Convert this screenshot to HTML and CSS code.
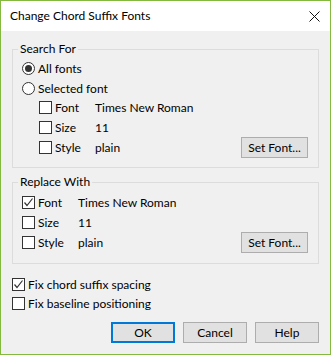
FILE: index.html
```html
<!DOCTYPE html>
<html lang="en">
<head>
    <meta charset="UTF-8">
    <title>Change Chord Suffix Fonts</title>
    <link rel="stylesheet" href="styles.css">
</head>
<body>
    <div class="window">
        <div class="titlebar">
            <span class="title">Change Chord Suffix Fonts</span>
            <svg class="close" width="11" height="11" viewBox="0 0 11 11">
                <path d="M0.5 0.5 L10.5 10.5 M10.5 0.5 L0.5 10.5" stroke="#111" stroke-width="1" fill="none"/>
            </svg>
        </div>

        <div class="content">
            <fieldset class="group">
                <legend>Search For</legend>
                <div class="group-body">
                    <div class="row"><span class="radio checked"></span><span>All fonts</span></div>
                    <div class="row"><span class="radio"></span><span>Selected font</span></div>
                    <div class="row indent"><span class="check"></span><span class="label">Font</span><span>Times New Roman</span></div>
                    <div class="row indent"><span class="check"></span><span class="label">Size</span><span>11</span></div>
                    <div class="row indent last">
                        <span class="check"></span><span class="label">Style</span><span>plain</span>
                        <button class="btn set-font">Set Font...</button>
                    </div>
                </div>
            </fieldset>

            <fieldset class="group replace">
                <legend>Replace With</legend>
                <div class="group-body">
                    <div class="row">
                        <span class="check"><svg width="11" height="11" viewBox="0 0 11 11"><path d="M1.5 5.5 L4 8.5 L9.5 1.5" stroke="#333" stroke-width="1.2" fill="none"/></svg></span>
                        <span class="label">Font</span><span>Times New Roman</span>
                    </div>
                    <div class="row"><span class="check"></span><span class="label">Size</span><span>11</span></div>
                    <div class="row last">
                        <span class="check"></span><span class="label">Style</span><span>plain</span>
                        <button class="btn set-font">Set Font...</button>
                    </div>
                </div>
            </fieldset>

            <div class="options">
                <div class="row">
                    <span class="check"><svg width="11" height="11" viewBox="0 0 11 11"><path d="M1.5 5.5 L4 8.5 L9.5 1.5" stroke="#333" stroke-width="1.2" fill="none"/></svg></span>
                    <span>Fix chord suffix spacing</span>
                </div>
                <div class="row"><span class="check"></span><span>Fix baseline positioning</span></div>
            </div>

            <div class="actions">
                <button class="btn default">OK</button>
                <button class="btn">Cancel</button>
                <button class="btn">Help</button>
            </div>
        </div>
    </div>
</body>
</html>
```
FILE: styles.css
```css
body {
    margin: 0;
    font-family: Lato, "Liberation Sans", sans-serif;
    font-size: 12px;
    color: #000;
}

.window {
    width: 331px;
    height: 355px;
    box-sizing: border-box;
    border: 1px solid #83b93f;
    background-color: #f0f0f0;
}

/* Title bar */
.titlebar {
    height: 30px;
    background-color: #fff;
    display: flex;
    align-items: center;
    justify-content: space-between;
    padding: 0 10px 0 9px;
}
.title {
    padding-bottom: 2px;
}

.content {
    padding: 10px 11px 0 11px;
}

/* Group boxes */
.group {
    margin: 0;
    padding: 0;
    border: 1px solid #dcdcdc;
    min-width: 0;
}
.group legend {
    padding: 0 2px;
    margin-left: 5px;
    line-height: 16px;
}
.group-body {
    padding: 1px 10px 9px 9px;
}
.group.replace {
    margin-top: 6px;
}
.group.replace .group-body {
    padding-top: 2px;
    padding-bottom: 10px;
}

.row {
    display: flex;
    align-items: center;
    height: 20px;
    white-space: nowrap;
}
.row.indent {
    padding-left: 17px;
    height: 19.7px;
}
.row.last {
    height: 21px;
}

.label {
    width: 40px;
}

/* Radio buttons and checkboxes */
.radio,
.check {
    width: 13px;
    height: 13px;
    box-sizing: border-box;
    border: 1px solid #333;
    background-color: #fff;
    margin-right: 3px;
    flex-shrink: 0;
    position: relative;
}
.check svg {
    display: block;
}
.radio {
    border-radius: 50%;
}
.radio.checked::after {
    content: "";
    position: absolute;
    left: 2px;
    top: 2px;
    width: 7px;
    height: 7px;
    border-radius: 50%;
    background-color: #333;
}

/* Buttons */
.btn {
    font-family: inherit;
    font-size: 12px;
    color: #000;
    width: 64px;
    height: 21px;
    padding: 0;
    box-sizing: border-box;
    border: 1px solid #adadad;
    background-color: #e1e1e1;
}
.btn.default {
    border: 2px solid #0078d7;
}
.set-font {
    width: 67px;
    margin-left: auto;
}

.options {
    padding-top: 11px;
}
.options .row {
    height: 19px;
}

.actions {
    display: flex;
    justify-content: flex-end;
    gap: 8px;
    padding-top: 9px;
}
```
